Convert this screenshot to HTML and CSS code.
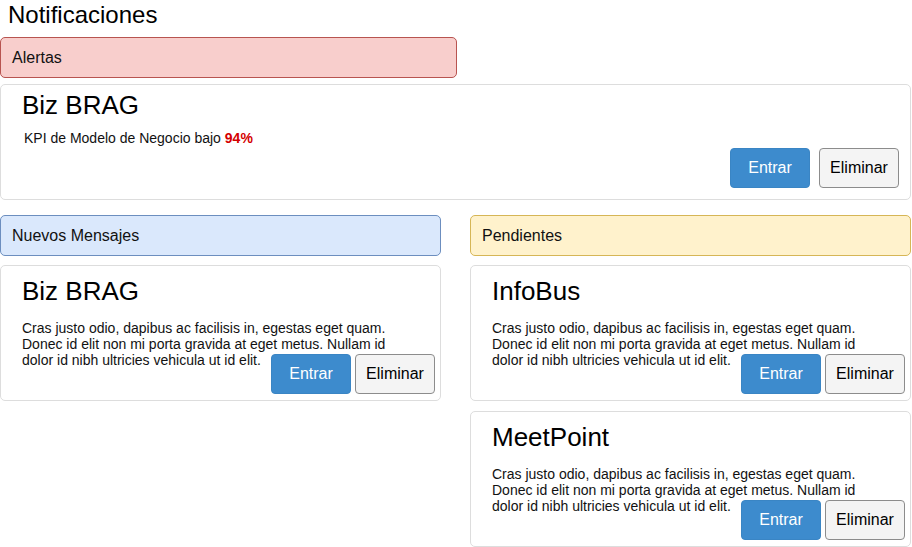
FILE: index.html
```html
<!DOCTYPE html>
<html lang="es">
<head>
<meta charset="utf-8">
<title>Notificaciones</title>
<link rel="stylesheet" href="styles.css">
</head>
<body>
<div class="page">
  <h1 class="page-title">Notificaciones</h1>

  <section class="section section-alerts">
    <div class="section-header header-red">Alertas</div>
    <div class="card card-wide">
      <h2 class="card-title">Biz BRAG</h2>
      <p class="kpi">KPI de Modelo de Negocio bajo <strong class="kpi-value">94%</strong></p>
      <div class="actions actions-wide">
        <button class="btn btn-primary">Entrar</button>
        <button class="btn btn-default">Eliminar</button>
      </div>
    </div>
  </section>

  <div class="columns">
    <section class="section">
      <div class="section-header header-blue">Nuevos Mensajes</div>
      <div class="card card-small">
        <h2 class="card-title">Biz BRAG</h2>
        <div class="card-body">
          <p class="card-text">Cras justo odio, dapibus ac facilisis in, egestas eget quam. Donec id elit non mi porta gravida at eget metus. Nullam id dolor id nibh ultricies vehicula ut id elit.</p>
          <div class="actions">
            <button class="btn btn-primary">Entrar</button>
            <button class="btn btn-default">Eliminar</button>
          </div>
        </div>
      </div>
    </section>

    <section class="section">
      <div class="section-header header-yellow">Pendientes</div>
      <div class="card card-small">
        <h2 class="card-title">InfoBus</h2>
        <div class="card-body">
          <p class="card-text">Cras justo odio, dapibus ac facilisis in, egestas eget quam. Donec id elit non mi porta gravida at eget metus. Nullam id dolor id nibh ultricies vehicula ut id elit.</p>
          <div class="actions">
            <button class="btn btn-primary">Entrar</button>
            <button class="btn btn-default">Eliminar</button>
          </div>
        </div>
      </div>
      <div class="card card-small card-next">
        <h2 class="card-title">MeetPoint</h2>
        <div class="card-body">
          <p class="card-text">Cras justo odio, dapibus ac facilisis in, egestas eget quam. Donec id elit non mi porta gravida at eget metus. Nullam id dolor id nibh ultricies vehicula ut id elit.</p>
          <div class="actions">
            <button class="btn btn-primary">Entrar</button>
            <button class="btn btn-default">Eliminar</button>
          </div>
        </div>
      </div>
    </section>
  </div>
</div>
</body>
</html>
```

FILE: styles.css
```css
* {
  box-sizing: border-box;
}

html, body {
  margin: 0;
  padding: 0;
  background: #ffffff;
}

body {
  font-family: "Liberation Sans", Arial, sans-serif;
  color: #111111;
}

.page {
  width: 911px;
}

.page-title {
  margin: 0 0 8px;
  padding: 1px 8px 0;
  font-size: 24px;
  line-height: 28px;
  font-weight: normal;
  color: #000000;
}

.section {
  display: flex;
  flex-direction: column;
}

.section-header {
  height: 41px;
  padding: 0 11px;
  display: flex;
  align-items: center;
  font-size: 16px;
  color: #111111;
  border: 1px solid;
  border-radius: 5px;
}

.header-red {
  width: 457px;
  background: #f8cecc;
  border-color: #b85450;
}

.header-blue {
  background: #dae8fc;
  border-color: #6c8ebf;
}

.header-yellow {
  background: #fff2cc;
  border-color: #d6b656;
}

.card {
  border: 1px solid #dddddd;
  border-radius: 5px;
  background: #ffffff;
}

.card-title {
  margin: 0;
  font-size: 26px;
  line-height: 30px;
  font-weight: normal;
  color: #000000;
}

/* Alert card */
.card-wide {
  margin-top: 6px;
  padding: 5px 11px 11px 21px;
}

.kpi {
  margin: 9px 0 0 2px;
  font-size: 14px;
  line-height: 19px;
}

.kpi-value {
  color: #d40000;
}

.actions {
  display: flex;
  justify-content: flex-end;
  gap: 4px;
}

.actions-wide {
  gap: 9px;
}

/* Column layout */
.columns {
  margin-top: 15px;
  display: grid;
  grid-template-columns: 441px 441px;
  column-gap: 29px;
  align-items: start;
}

.card-small {
  margin-top: 9px;
  height: 136px;
  padding: 10px 5px 5px 21px;
}

.card-next {
  margin-top: 10px;
}

.card-body {
  margin-top: 14px;
  display: grid;
  grid-template-areas: "stack";
}

.card-text {
  grid-area: stack;
  align-self: start;
  margin: 0;
  max-width: 380px;
  font-size: 14px;
  line-height: 16px;
}

.card-body .actions {
  grid-area: stack;
  align-self: end;
  justify-self: end;
  margin-top: 34px;
}

.btn {
  width: 80px;
  height: 40px;
  padding: 0;
  font-family: "Liberation Sans", Arial, sans-serif;
  font-size: 16px;
  border-radius: 4px;
  border: 1px solid;
  cursor: pointer;
}

.btn-primary {
  background: #3d8bcd;
  border-color: #3a85c4;
  color: #ffffff;
}

.btn-default {
  background: #f4f4f4;
  border-color: #8c8c8c;
  color: #000000;
}
```
